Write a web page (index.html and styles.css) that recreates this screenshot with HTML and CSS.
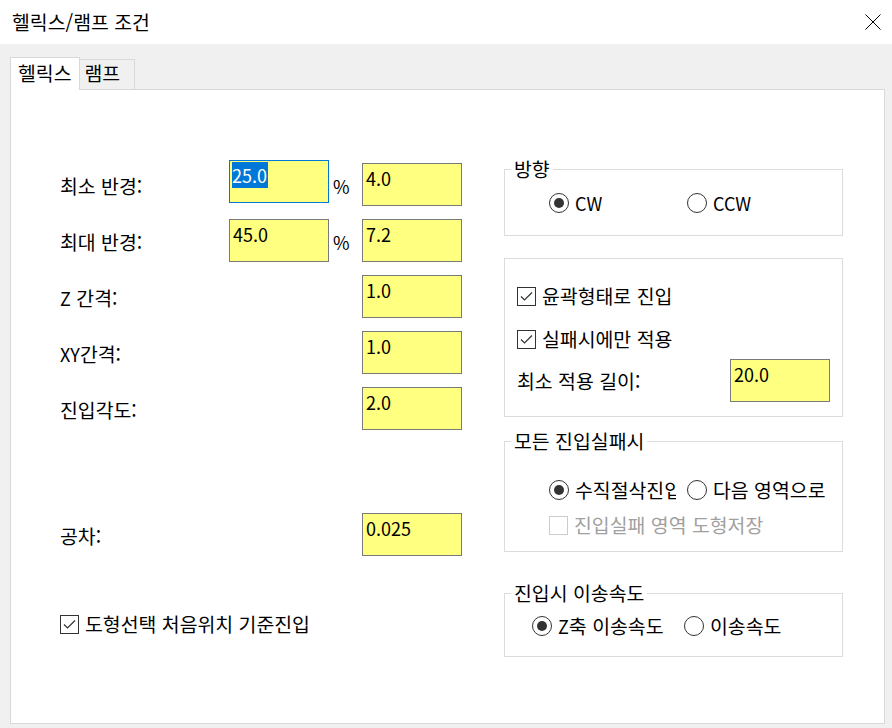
FILE: index.html
```html
<!DOCTYPE html>
<html lang="ko">
  <head>
    <meta charset="UTF-8" />
    <meta name="viewport" content="width=device-width, initial-scale=1.0" />
    <title>헬릭스/램프 조건</title>
    <link rel="stylesheet" href="styles.css">
  </head>
  <body>
    <div id="window">
      <div class="title-bar">
        <h1>헬릭스/램프 조건</h1>
        <svg class="close-btn" width="16" height="16" viewBox="0 0 16 16">
          <path d="M0.5 0.5 L15.5 15.5 M15.5 0.5 L0.5 15.5" stroke="#000" stroke-width="1" fill="none" />
        </svg>
      </div>

      <div class="tabs">
        <div class="tab active">헬릭스</div>
        <div class="tab">램프</div>
      </div>

      <div class="panel">
        <div class="left-col">
          <div class="param-row">
            <span class="label">최소 반경:</span>
            <div class="field focused"><span class="sel">25.0</span></div>
            <span class="unit">%</span>
            <div class="field">4.0</div>
          </div>
          <div class="param-row">
            <span class="label">최대 반경:</span>
            <div class="field">45.0</div>
            <span class="unit">%</span>
            <div class="field">7.2</div>
          </div>
          <div class="param-row">
            <span class="label"><span class="lat">Z</span> 간격:</span>
            <span></span>
            <span></span>
            <div class="field">1.0</div>
          </div>
          <div class="param-row">
            <span class="label"><span class="lat">XY</span>간격:</span>
            <span></span>
            <span></span>
            <div class="field">1.0</div>
          </div>
          <div class="param-row">
            <span class="label">진입각도:</span>
            <span></span>
            <span></span>
            <div class="field">2.0</div>
          </div>
          <div class="param-row tol-row">
            <span class="label">공차:</span>
            <span></span>
            <span></span>
            <div class="field">0.025</div>
          </div>

          <label class="check first-pos">
            <span class="box checked">
              <svg width="17" height="17" viewBox="0 0 17 17"><polyline points="3,8.5 6.5,12 14,4.5" fill="none" stroke="#333" stroke-width="1.2" /></svg>
            </span>
            도형선택 처음위치 기준진입
          </label>
        </div>

        <div class="right-col">
          <fieldset class="group">
            <legend>방향</legend>
            <div class="group-body dir-body">
              <div class="radio-row">
                <label class="radio"><span class="circle on"></span><span class="lat">CW</span></label>
                <label class="radio"><span class="circle"></span><span class="lat">CCW</span></label>
              </div>
            </div>
          </fieldset>

          <div class="group plain-group">
            <label class="check">
              <span class="box checked">
                <svg width="17" height="17" viewBox="0 0 17 17"><polyline points="3,8.5 6.5,12 14,4.5" fill="none" stroke="#333" stroke-width="1.2" /></svg>
              </span>
              윤곽형태로 진입
            </label>
            <label class="check">
              <span class="box checked">
                <svg width="17" height="17" viewBox="0 0 17 17"><polyline points="3,8.5 6.5,12 14,4.5" fill="none" stroke="#333" stroke-width="1.2" /></svg>
              </span>
              실패시에만 적용
            </label>
            <div class="len-row">
              <span>최소 적용 길이:</span>
              <div class="field">20.0</div>
            </div>
          </div>

          <fieldset class="group fail-group">
            <legend>모든 진입실패시</legend>
            <div class="group-body fail-body">
              <div class="radio-row">
                <label class="radio"><span class="circle on"></span><span class="clip">수직절삭진입</span></label>
                <label class="radio"><span class="circle"></span>다음 영역으로</label>
              </div>
              <label class="check disabled">
                <span class="box"></span>
                진입실패 영역 도형저장
              </label>
            </div>
          </fieldset>

          <fieldset class="group feed-group">
            <legend>진입시 이송속도</legend>
            <div class="group-body feed-body">
              <div class="radio-row">
                <label class="radio"><span class="circle on"></span><span><span class="lat">Z</span>축 이송속도</span></label>
                <label class="radio"><span class="circle"></span>이송속도</label>
              </div>
            </div>
          </fieldset>
        </div>
      </div>
    </div>
  </body>
</html>
```

FILE: styles.css
```css
* {
  box-sizing: border-box;
  margin: 0;
  padding: 0;
}
body {
  font-family: "Noto Sans CJK KR", "Noto Sans", sans-serif;
  font-size: 19.4px;
  line-height: 26px;
  color: #000;
  background-color: #f0f0f0;
}
.lat {
  font-size: 18px;
}
#window {
  display: flex;
  flex-direction: column;
  height: 728px;
}

.title-bar {
  height: 44px;
  flex-shrink: 0;
  background-color: #fff;
  display: flex;
  align-items: center;
  justify-content: space-between;
  padding: 0 11px 0 12px;
}
.title-bar h1 {
  font-size: 19.4px;
  font-weight: normal;
}

.tabs {
  display: flex;
  align-items: flex-end;
  margin: 13px 0 0 10px;
  position: relative;
  z-index: 1;
}
.tab {
  border: 1px solid #d9d9d9;
  border-bottom: none;
  height: 30px;
  padding: 0 14px 0 5px;
  border-left: none;
}
.tab.active {
  background-color: #fff;
  height: 33px;
  margin-bottom: -1px;
  padding: 2px 7px 0 7px;
  border-left: 1px solid #d9d9d9;
}

.panel {
  flex: 1;
  margin: 0 7px 4px 10px;
  background-color: #fff;
  border: 1px solid #d9d9d9;
  display: grid;
  grid-template-columns: 1fr 339px;
  padding: 0 41px 0 49px;
}

/* left column */
.left-col {
  padding-top: 73px;
  display: flex;
  flex-direction: column;
  gap: 13px;
}
.param-row {
  display: grid;
  grid-template-columns: 169px 100px 33px 100px;
  align-items: center;
  height: 43px;
}
.param-row .label {
  padding-top: 2px;
}
.unit {
  font-size: 18px;
  padding: 3px 0 0 4px;
}
.tol-row {
  margin-top: 70px;
}
.field {
  width: 100px;
  height: 43px;
  border: 1px solid #7a7a7a;
  background-color: #ffff80;
  padding: 1px 3px;
  font-size: 18px;
  align-self: start;
}
.field.focused {
  border-color: #0078d7;
  margin-top: -3px;
  padding-left: 2px;
}
.sel {
  background-color: #0078d7;
  color: #fff;
  display: inline-block;
  padding-right: 1px;
}
.first-pos {
  margin-top: 42px;
}

/* check boxes & radios */
.check {
  display: flex;
  align-items: center;
  gap: 6px;
  height: 26px;
  white-space: nowrap;
}
.box {
  width: 19px;
  height: 19px;
  border: 1px solid #333;
  flex-shrink: 0;
  display: flex;
}
.check.disabled {
  color: #a0a0a0;
}
.check.disabled .box {
  border-color: #ccc;
}
.radio {
  display: flex;
  align-items: center;
  gap: 6px;
  height: 26px;
  white-space: nowrap;
}
.circle {
  width: 20px;
  height: 20px;
  border: 1.3px solid #333;
  border-radius: 50%;
  flex-shrink: 0;
  display: flex;
  align-items: center;
  justify-content: center;
}
.circle.on::after {
  content: "";
  width: 10px;
  height: 10px;
  border-radius: 50%;
  background-color: #333;
}
.clip {
  width: 101px;
  overflow: hidden;
}

/* right column */
.right-col {
  padding-top: 66px;
  display: flex;
  flex-direction: column;
}
.group {
  border: 1px solid #dcdcdc;
  min-width: 0;
  padding: 0;
}
.group legend {
  margin-left: 6px;
  padding: 0 3px;
  line-height: 26px;
}
.radio-row {
  display: grid;
  grid-template-columns: 138px auto;
}
.dir-body {
  padding: 8px 0 19px 44px;
}
.plain-group {
  margin-top: 22px;
  padding: 24px 12px 14px 12px;
  display: flex;
  flex-direction: column;
}
.plain-group .check + .check {
  margin-top: 17px;
}
.len-row {
  margin-top: 7px;
  display: flex;
  justify-content: space-between;
  align-items: center;
}
.fail-group {
  margin-top: 11px;
}
.fail-body {
  padding: 23px 0 13px 44px;
}
.fail-body .check {
  margin-top: 9px;
}
.feed-group {
  margin-top: 28px;
}
.feed-body {
  padding: 7px 0 17px 27px;
}
.feed-body .radio-row {
  grid-template-columns: 152px auto;
}
```
